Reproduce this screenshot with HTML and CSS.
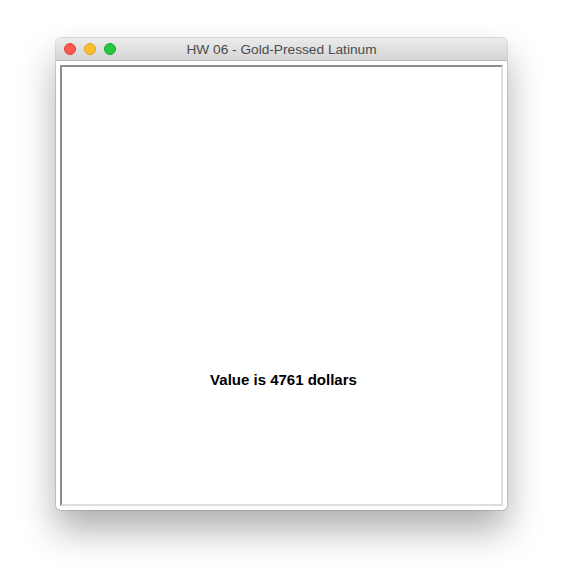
FILE: index.html
```html
<!DOCTYPE html>
<html>
<head>
<meta charset="utf-8">
<link rel="stylesheet" href="styles.css">
</head>
<body>
<div class="window">
  <div class="titlebar">
    <div class="lights">
      <span class="light red"></span>
      <span class="light yellow"></span>
      <span class="light green"></span>
    </div>
    <div class="title">HW 06 - Gold-Pressed Latinum</div>
  </div>
  <div class="content">
    <div class="panel">
      <div class="value">Value is 4761 dollars</div>
    </div>
  </div>
</div>
</body>
</html>
```
FILE: styles.css
```css
html, body {
  margin: 0;
  padding: 0;
  background: #ffffff;
}
body {
  width: 562px;
  height: 584px;
  overflow: hidden;
}
.window {
  margin: 38px 0 0 56px;
  width: 451px;
  height: 472px;
  box-sizing: border-box;
  border-radius: 5px;
  background: #ffffff;
  box-shadow: 0 0 0 1px rgba(0,0,0,0.12), 0 20px 36px rgba(0,0,0,0.32);
  display: flex;
  flex-direction: column;
  overflow: hidden;
}
.titlebar {
  position: relative;
  height: 22px;
  flex: none;
  background: linear-gradient(#ebebeb, #d5d5d5);
  border-bottom: 1px solid #b9b9b9;
  display: flex;
  align-items: center;
}
.lights {
  display: flex;
  gap: 8px;
  padding-left: 8px;
}
.light {
  width: 12px;
  height: 12px;
  border-radius: 50%;
  box-sizing: border-box;
}
.red { background: #fd5752; border: 0.5px solid #e0443e; }
.yellow { background: #fdbc2e; border: 0.5px solid #dea123; }
.green { background: #27c83f; border: 0.5px solid #1aab29; }
.title {
  position: absolute;
  left: 0;
  right: 0;
  top: 1px;
  height: 22px;
  line-height: 22px;
  text-align: center;
  font-family: "Liberation Sans", Arial, sans-serif;
  font-size: 13.7px;
  color: #4c4c4c;
}
.content {
  flex: 1;
  padding: 4px 4px 4px 4px;
  display: flex;
}
.panel {
  flex: 1;
  border-style: solid;
  border-width: 2px;
  border-color: #8c8c8c #dedede #dedede #8c8c8c;
  display: flex;
  flex-direction: column;
  align-items: center;
  padding-top: 304px;
  padding-left: 4px;
}
.value {
  font-family: "Liberation Sans", Arial, sans-serif;
  font-weight: bold;
  font-size: 15px;
  line-height: 17px;
  color: #000;
}
```
